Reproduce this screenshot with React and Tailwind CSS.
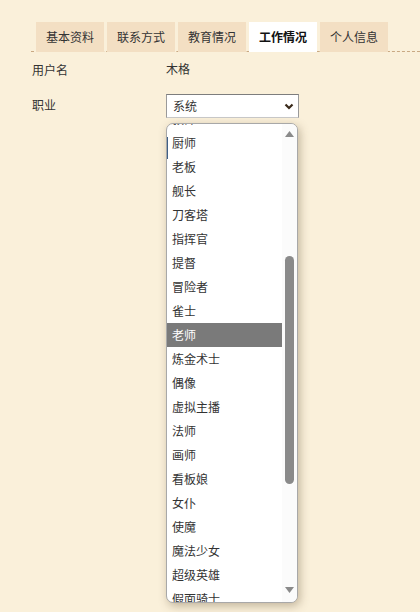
import React from 'react';

const tabs = ['基本资料', '联系方式', '教育情况', '工作情况', '个人信息'];

const jobs = [
  '教师', '厨师', '老板', '舰长', '刀客塔', '指挥官', '提督', '冒险者', '雀士', '老师',
  '炼金术士', '偶像', '虚拟主播', '法师', '画师', '看板娘', '女仆', '使魔', '魔法少女',
  '超级英雄', '假面骑士', '勇者',
];

export default function App() {
  return (
    <div className="min-h-[612px] bg-[#faf0da] text-[12px] text-[#333] font-['Noto_Sans_CJK_SC','Noto_Sans',sans-serif]">
      <div className="pt-[22px] pl-[31px]">
        <div className="flex gap-[3px] pl-[5px] border-b border-dashed border-[#c9a983]">
          {tabs.map((t) => (
            <div
              key={t}
              className={`h-[30px] px-[10px] leading-[29px] -mb-px ${
                t === '工作情况' ? 'bg-white font-bold text-[#111]' : 'bg-[#f3dfc3]'
              }`}
            >
              {t}
            </div>
          ))}
        </div>
      </div>

      <div className="pl-[32px]">
        <div className="flex items-center h-[36px]">
          <div className="w-[134px]">用户名</div>
          <div className="-mt-[2px]">木格</div>
        </div>

        <div className="flex items-start mt-[6px]">
          <div className="w-[134px] pt-[2px]">职业</div>
          <div className="relative">
            <div className="w-[133px] h-[24px] flex items-center justify-between pl-[6px] pr-[3px] bg-white border border-[#9a9a9a] border-t-[#7d7d7d] border-b-[#c9c9c9]">
              <span>系统</span>
              <svg width="12" height="12" viewBox="0 0 12 12" fill="none">
                <path d="M2.5 4.5 6 8l3.5-3.5" stroke="#3a2a1a" strokeWidth="2.2" />
              </svg>
            </div>

            <div className="absolute left-0 top-[29px] w-[132px] h-[480px] bg-white border border-[#a8a8a8] rounded-[7px] shadow-[2px_3px_10px_rgba(90,70,40,0.35)] flex overflow-hidden">
              <span className="absolute left-0 top-[13px] w-px h-[22px] bg-[#3f5f86]" />
              <div className="flex-1 overflow-hidden">
                <div className="-mt-[17px]">
                  {jobs.map((j) => (
                    <div
                      key={j}
                      className={`h-[24px] leading-[24px] pl-[5px] ${
                        j === '老师' ? 'bg-[#7a7a7a] text-white' : ''
                      }`}
                    >
                      {j}
                    </div>
                  ))}
                </div>
              </div>
              <div className="w-[15px] bg-[#fbfbfb] flex flex-col items-center relative">
                <svg className="mt-[7px]" width="9" height="6" viewBox="0 0 9 6">
                  <path d="M4.5 0 9 6H0z" fill="#8a8a8a" />
                </svg>
                <div className="absolute left-[3px] top-[132px] w-[9px] h-[228px] rounded-full bg-[#8a8a8a]" />
                <svg className="absolute bottom-[9px] left-[3px]" width="9" height="6" viewBox="0 0 9 6">
                  <path d="M0 0h9L4.5 6z" fill="#8a8a8a" />
                </svg>
              </div>
            </div>
          </div>
        </div>
      </div>
    </div>
  );
}
